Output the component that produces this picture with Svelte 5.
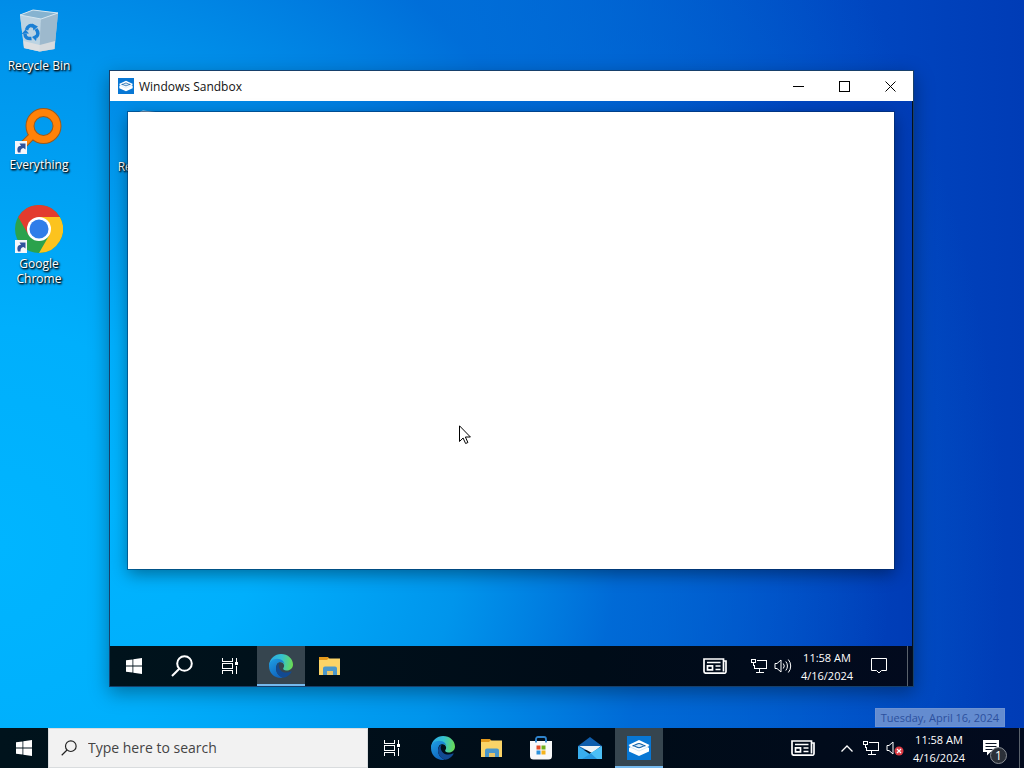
<script lang="ts">
  let query = $state('');

  const time = '11:58 AM';
  const date = '4/16/2024';

  const shortcuts = [
    { name: 'Recycle Bin', icon: recycleBin },
    { name: 'Everything', icon: everything },
    { name: 'Google Chrome', icon: chrome },
  ];

  const pinned = [
    { name: 'Microsoft Edge', icon: edge },
    { name: 'File Explorer', icon: explorer },
    { name: 'Microsoft Store', icon: store },
    { name: 'Mail', icon: mail },
    { name: 'Windows Sandbox', icon: sandbox, active: true },
  ];

  const sessionPinned = [
    { name: 'Microsoft Edge', icon: edge, active: true },
    { name: 'File Explorer', icon: explorer },
  ];
</script>

{#snippet arrowBadge()}
  <rect x="0" y="35" width="12" height="13" fill="#f4f6fa" />
  <path d="M3 46.500c-1.500-4.500 0-6.500 3-6.800L4.500 37.500H10.500V43.500L8.500 42c-2.500.3-3 2-3 4.500z" fill="#2f529c" />
{/snippet}

{#snippet recycleBin()}
  <svg width="48" height="48" viewBox="0 0 48 48" aria-hidden="true">
    <path d="M5 8 18 3l25 3-3.500 36-14.500 2.500L9 41z" fill="#a9c3d6" />
    <path d="M5 8l21 4-1.500 32.500L9 41z" fill="#bcd3e2" />
    <path d="M26 12 43 6l-3.500 36-15 2.500z" fill="#9db9cd" />
    <path d="M8.500 34l16.300 4 15.300-4-.6 8-14.900 2.500L9 41z" fill="#e4e2e2" opacity=".8" />
    <path d="M5 8 18 3l25 3-17 6z" fill="#86b3d0" stroke="#d5e6f0" stroke-linejoin="round" />
    <g fill="none" stroke="#1a7fd4" stroke-width="3.500">
      <path d="M11.500 23c1-4 4-5.500 7-3.500" />
      <path d="M21 22c2.500 3 2.500 6 0 8" />
      <path d="M16.500 31.500c-4 .5-6.500-1-6.500-4.500" />
    </g>
    <path d="M17 16.500l6 3-4.500 4zM22.500 27l-1.500 7-4-4zM6.500 27l4-4.500 3.500 4z" fill="#1a7fd4" />
  </svg>
{/snippet}

{#snippet everything()}
  <svg width="48" height="48" viewBox="0 0 48 48" aria-hidden="true">
    <path d="M18 29 6 41" stroke="#9a5a1c" stroke-width="8" />
    <circle cx="28.500" cy="20" r="13.500" fill="none" stroke="#9a5a1c" stroke-width="9" />
    <path d="M19 28 6 41" stroke="#ff8208" stroke-width="6" />
    <circle cx="28.500" cy="20" r="13.500" fill="none" stroke="#ff8208" stroke-width="7" />
    {@render arrowBadge()}
  </svg>
{/snippet}

{#snippet chrome()}
  <svg width="48" height="48" viewBox="0 0 48 48" aria-hidden="true">
    <circle cx="24" cy="24" r="24" fill="#2ba24c" />
    <path d="M24 12h20.800A24 24 0 0 1 24 48l10.400-18z" fill="#fcc31e" />
    <path d="M3.200 12a24 24 0 0 1 41.600 0H24L13.600 30z" fill="#e33b2e" />
    <circle cx="24" cy="24" r="12" fill="#fff" />
    <circle cx="24" cy="24" r="9.500" fill="#2f7de9" />
    {@render arrowBadge()}
  </svg>
{/snippet}

{#snippet windowsLogo()}
  <svg width="16" height="16" viewBox="0 0 16 16" fill="#fff" aria-hidden="true">
    <path d="M0 2.300 6.500 1.400v6.200H0zM7.300 1.300 16 0v7.600H7.300zM0 8.400h6.500v6.200L0 13.700zM7.300 8.400H16V16l-8.700-1.300z" />
  </svg>
{/snippet}

{#snippet magnifier(size: number, weight: number)}
  <svg width={size} height={size} viewBox="0 0 22 22" fill="none" stroke="currentColor" stroke-width={weight} aria-hidden="true">
    <circle cx="13.500" cy="8.500" r="7.300" />
    <path d="M8.300 13.700 1 21" />
  </svg>
{/snippet}

{#snippet taskView()}
  <svg width="16" height="16" viewBox="0 0 16 16" fill="none" stroke="#fff" shape-rendering="crispEdges" aria-hidden="true">
    <path d="M.5 0v3.500h10V0M.5 16v-3.500h10V16M.5 5.500h10v5H.5zM14.500 0v4M14.500 8v8" />
    <path d="M13 4h3v3h-3z" fill="#fff" stroke="none" />
  </svg>
{/snippet}

{#snippet edge()}
  <svg width="24" height="24" viewBox="0 0 24 24" aria-hidden="true">
    <defs>
      <linearGradient id="edge-top" x1="0" y1=".5" x2="1" y2=".6">
        <stop offset="0" stop-color="#2aa9e6" />
        <stop offset=".5" stop-color="#35c2cf" />
        <stop offset="1" stop-color="#6bdc50" />
      </linearGradient>
      <linearGradient id="edge-left" x1="0" y1="0" x2=".6" y2="1">
        <stop offset="0" stop-color="#1fa0e4" />
        <stop offset="1" stop-color="#0f63bd" />
      </linearGradient>
    </defs>
    <path d="M0 11C1 4 6 0 12 0c7 0 12 5 12 10.500 0 3.500-2.800 6-6 6-3 0-4.500-1.200-3.500-2.700 1.500-2 .5-5.800-4-5.800z" fill="url(#edge-top)" />
    <path d="M0 12c0-4.500 4-7.300 8-7.300 4.500 0 7.500 2.800 7.500 6.300 0-1.800-1.700-3-4-3-3.500 0-4.500 3.500-4.500 6.500 0 4.500 3 7.500 7 9.300C6 25 0 19.500 0 12z" fill="url(#edge-left)" />
    <path d="M11 8.500c-2.700 1-4 3.500-4 6 0 4.500 3.500 8.500 7.500 9.200 4-.7 6.500-3 8-5.700.3-.6-.2-.9-.7-.6-5 2.600-11.300.6-12-4.900-.2-1.800.4-3.200 1.200-4z" fill="#124a92" />
  </svg>
{/snippet}

{#snippet explorer()}
  <svg width="24" height="24" viewBox="0 0 24 24" aria-hidden="true">
    <path d="M1 3h9l1.500 2H22v6H1z" fill="#e49a1c" />
    <path d="M1 6h8l1.500-1.500H22V21H1z" fill="#fbd467" />
    <path d="M5 21v-6.500a2 2 0 0 1 2-2h10a2 2 0 0 1 2 2V21h-4v-4H9v4z" fill="#4a97cb" />
    <path d="M9 17h6v4H9z" fill="#e8c468" />
  </svg>
{/snippet}

{#snippet store()}
  <svg width="24" height="24" viewBox="0 0 24 24" aria-hidden="true">
    <path d="M7 6V3a2 2 0 0 1 2-2h6a2 2 0 0 1 2 2v3" fill="none" stroke="#2f84cc" stroke-width="1.800" />
    <path d="M1 5h22v15a3.500 3.500 0 0 1-3.500 3.500h-15A3.500 3.500 0 0 1 1 20z" fill="#f7f8f9" />
    <path d="M7 6.500V4M17 6.500V4" stroke="#2f84cc" stroke-width="1.800" />
    <path d="M7.500 9.500h4v4h-4z" fill="#e34b27" />
    <path d="M12.500 9.500h4v4h-4z" fill="#6fae18" />
    <path d="M7.500 14.500h4v4h-4z" fill="#2c92dc" />
    <path d="M12.500 14.500h4v4h-4z" fill="#f4b31c" />
  </svg>
{/snippet}

{#snippet mail()}
  <svg width="24" height="24" viewBox="0 0 24 24" aria-hidden="true">
    <path d="M0 10 12 1l12 9v4H0z" fill="#0f5ead" />
    <path d="M1 10h22l-9 7z" fill="#eef3f6" />
    <path d="M24 10v13H3z" fill="#4cc0f6" />
    <path d="M0 10l19 13H0z" fill="#38aeee" />
    <path d="M13 17.500 19 23H4z" fill="#2798e0" />
  </svg>
{/snippet}

{#snippet sandbox(size = 24)}
  <svg width={size} height={size} viewBox="0 0 24 24" aria-hidden="true">
    <path d="M0 0h24v24H0z" fill="#0877d4" />
    <path d="M12 4 22.500 9 20.500 11l1.500 1v3.500L12 20 2 15.500V12l1.500-1-2-2z" fill="#fff" />
    <path d="M2 10.500 12 15l10-4.500" fill="none" stroke="#b4d6f2" stroke-width=".6" />
    <path d="M5.500 9.700C9 9.400 10 7.500 12 7.500s3 1.900 6.500 2.200c-3.500.3-4.500 2-6.500 2s-3-1.700-6.500-2z" fill="#d6e8f6" stroke="#0d5fa8" stroke-width="1.100" />
  </svg>
{/snippet}

{#snippet news()}
  <svg width="24" height="16" viewBox="0 0 24 16" fill="none" stroke="#fff" stroke-width="1.700" aria-hidden="true">
    <path d="M20.500 3H23v10.500a1.700 1.700 0 0 1-2 1.700H3a2 2 0 0 1-2-2V1h19.500v12.500" />
    <path d="M4 4.500h13.500M12.500 8h5M12.500 11.500h5M4.500 7.800h5v4h-5z" />
  </svg>
{/snippet}

{#snippet network()}
  <svg width="16" height="14" viewBox="0 0 16 14" fill="none" stroke="#fff" shape-rendering="crispEdges" aria-hidden="true">
    <path d="M6 1.500h9.500v8h-12V6M5 13.500h8M8.500 10v3" />
    <path d="M.5.500h4v3h-4zM2.500 4v2.500H4" />
  </svg>
{/snippet}

{#snippet speaker(muted = false)}
  <svg width="18" height="16" viewBox="0 0 18 16" fill="none" stroke="#fff" aria-hidden="true">
    <path d="M1 5.500h2L7 2v12l-4-3.500H1z" />
    {#if muted}
      <circle cx="13" cy="11" r="4.500" fill="#dc3a43" stroke="none" />
      <path d="M11 9l4 4m0-4-4 4" stroke-width="1.200" />
    {:else}
      <path d="M9.300 5.500a4 4 0 0 1 0 5M11.800 3.500a7 7 0 0 1 0 9M14.300 1.500a10 10 0 0 1 0 13" />
    {/if}
  </svg>
{/snippet}

{#snippet desktopIcons(items)}
  <ul class="shortcuts">
    {#each items as item}
      <li>
        <button class="shortcut">
          {@render item.icon()}
          <span>{item.name}</span>
        </button>
      </li>
    {/each}
  </ul>
{/snippet}

{#snippet pinnedApps(items)}
  <div class="pinned">
    {#each items as item}
      <button class="task" class:active={item.active} aria-label={item.name}>
        {@render item.icon()}
      </button>
    {/each}
  </div>
{/snippet}

{#snippet clock()}
  <button class="clock">
    <span>{time}</span>
    <span>{date}</span>
  </button>
{/snippet}

<main class="screen">
  <div class="work-area wallpaper">
    {@render desktopIcons(shortcuts)}

    <section class="window" aria-label="Windows Sandbox">
      <header class="titlebar">
        {@render sandbox(16)}
        <span class="title">Windows Sandbox</span>
        <button class="caption" aria-label="Minimize">
          <svg width="11" height="11" viewBox="0 0 11 11" stroke="#000" shape-rendering="crispEdges"><path d="M0 5.500h11" /></svg>
        </button>
        <button class="caption" aria-label="Maximize">
          <svg width="11" height="11" viewBox="0 0 11 11" fill="none" stroke="#000" shape-rendering="crispEdges"><path d="M.5.500h10v10H.5z" /></svg>
        </button>
        <button class="caption" aria-label="Close">
          <svg width="11" height="11" viewBox="0 0 11 11" stroke="#000"><path d="M.5.500l10 10m0-10-10 10" /></svg>
        </button>
      </header>

      <div class="session">
        <div class="work-area wallpaper">
          {@render desktopIcons(shortcuts.slice(0, 1))}
          <div class="blank">
            <svg class="cursor" width="12" height="20" viewBox="0 0 12 20" fill="#fff" stroke="#000" aria-hidden="true">
              <path d="M.5.800v15.700l3.600-3.500 2.500 5.500 2.300-1-2.500-5.500h5z" />
            </svg>
          </div>
        </div>

        <footer class="taskbar">
          <button class="task" aria-label="Start">{@render windowsLogo()}</button>
          <button class="task" aria-label="Search">{@render magnifier(22, 2)}</button>
          <button class="task" aria-label="Task View">{@render taskView()}</button>
          {@render pinnedApps(sessionPinned)}
          <div class="tray">
            <button class="news" aria-label="News">{@render news()}</button>
            <button class="status" aria-label="Network">{@render network()}</button>
            <button class="status" aria-label="Volume">{@render speaker()}</button>
            {@render clock()}
            <button class="task" aria-label="Notifications">
              <svg width="16" height="16" viewBox="0 0 16 16" fill="none" stroke="#fff" aria-hidden="true">
                <path d="M.5.500h15v12h-5L8 15l-2.500-2.500h-5z" />
              </svg>
            </button>
            <button class="peek" aria-label="Show desktop"></button>
          </div>
        </footer>
      </div>
    </section>

    <div class="tooltip" role="tooltip">Tuesday, April 16, 2024</div>
  </div>

  <footer class="taskbar">
    <button class="task" aria-label="Start">{@render windowsLogo()}</button>
    <label class="search">
      {@render magnifier(16, 1.6)}
      <input type="text" aria-label="Search" placeholder="Type here to search" bind:value={query} />
    </label>
    <button class="task" aria-label="Task View">{@render taskView()}</button>
    {@render pinnedApps(pinned)}
    <div class="tray">
      <button class="news" aria-label="News">{@render news()}</button>
      <button class="status" aria-label="Show hidden icons">
        <svg width="12" height="7" viewBox="0 0 12 7" fill="none" stroke="#fff" stroke-width="1.300" aria-hidden="true"><path d="M.5 6.500 6 1l5.500 5.500" /></svg>
      </button>
      <button class="status" aria-label="Network">{@render network()}</button>
      <button class="status" aria-label="Volume">{@render speaker(true)}</button>
      {@render clock()}
      <button class="task" aria-label="Notifications">
        <svg width="16" height="16" viewBox="0 0 16 16" aria-hidden="true">
          <path d="M0 0h16v12H7.500L4 15.500V12H0z" fill="#fff" />
          <path d="M2.500 3.500h11M2.500 6.500h11M2.500 9.500h7" stroke="#0a1424" />
        </svg>
        <span class="count">1</span>
      </button>
      <button class="peek" aria-label="Show desktop"></button>
    </div>
  </footer>
</main>

<style>
  :global(body) {
    margin: 0;
    overflow: hidden;
  }

  .screen {
    display: flex;
    flex-direction: column;
    height: 100vh;
    font-family: 'Open Sans', 'Noto Sans', sans-serif;
    font-size: 12px;
    line-height: 15px;
  }

  button {
    display: flex;
    align-items: center;
    justify-content: center;
    margin: 0;
    padding: 0;
    border: 0;
    background: none;
    color: inherit;
    font: inherit;
  }

  svg {
    flex: none;
  }

  .work-area {
    position: relative;
    flex: 1;
    min-height: 0;
  }

  .wallpaper {
    background:
      radial-gradient(ellipse 98% 150% at 0% 75%, #00b5ff 0%, #00affc 20%, #0095ec 45%, rgba(0, 112, 218, 0.75) 65%, rgba(0, 72, 196, 0) 100%),
      linear-gradient(90deg, #007ce0 0%, #0068d4 45%, #0048c2 82%, #003cb6 100%);
  }

  .shortcuts {
    display: flex;
    flex-direction: column;
    gap: 33px;
    width: 76px;
    margin: 0;
    padding: 7px 0 0 1px;
    list-style: none;
  }

  .shortcut {
    flex-direction: column;
    gap: 3px;
    width: 100%;
    color: #fff;
    text-align: center;
    text-shadow: 1px 1px 2px #000, 1px 1px 2px #000;
  }

  .window {
    position: absolute;
    inset: 70px 110px 41px 109px;
    display: flex;
    flex-direction: column;
    border: 1px solid #17406b;
    background: #fff;
    box-shadow: 0 6px 18px rgba(0, 0, 0, 0.35);
  }

  .titlebar {
    display: flex;
    align-items: center;
    height: 30px;
    padding-left: 8px;
  }

  .title {
    flex: 1;
    padding-left: 5px;
    color: #111;
  }

  .caption {
    width: 46px;
    height: 30px;
  }

  .session {
    display: flex;
    flex: 1;
    flex-direction: column;
    min-height: 0;
    border-right: 1px solid #04101f;
  }

  .blank {
    position: absolute;
    inset: 11px 18px 77px 18px;
    background: #fff;
    box-shadow: 0 0 0 1px rgba(0, 40, 90, 0.5), 0 5px 16px rgba(0, 0, 0, 0.4);
  }

  .cursor {
    position: absolute;
    top: 313px;
    left: 331px;
  }

  .tooltip {
    position: absolute;
    right: 19px;
    bottom: 1px;
    padding: 1px 5px;
    border: 1px solid #6f93d2;
    background: #648cd0;
    color: #2c509e;
    font-size: 11px;
  }

  .taskbar {
    display: flex;
    height: 40px;
    background: linear-gradient(90deg, #00131c, #000c18 60%, #020a1e);
    color: #fff;
  }

  .task {
    position: relative;
    width: 48px;
    height: 40px;
  }

  .task.active {
    background: #36454f;
    box-shadow: inset 0 -2px #76b9ed;
  }

  .pinned {
    display: flex;
    gap: 1px;
    padding-left: 3px;
  }

  .search {
    display: flex;
    align-items: center;
    gap: 11px;
    box-sizing: border-box;
    width: 320px;
    padding: 0 12px;
    border: 1px solid #d9dcde;
    background: #f2f2f2;
    color: #222;
  }

  .search input {
    flex: 1;
    min-width: 0;
    padding: 0;
    border: 0;
    outline: 0;
    background: none;
    color: #222;
    font: inherit;
    font-size: 14px;
    line-height: 20px;
  }

  .search input::placeholder {
    color: #444;
    opacity: 1;
  }

  .tray {
    display: flex;
    margin-left: auto;
  }

  .news {
    width: 24px;
    margin-right: 20px;
  }

  .status {
    width: 24px;
  }

  .clock {
    flex-direction: column;
    gap: 3px;
    width: 56px;
    margin-left: 4px;
    font-size: 11px;
    white-space: nowrap;
  }

  .count {
    position: absolute;
    right: 8px;
    bottom: 4px;
    width: 15px;
    height: 15px;
    border: 1px solid #8a8f96;
    border-radius: 50%;
    background: #2b3038;
    text-align: center;
  }

  .peek {
    width: 5px;
    margin-left: 4px;
    border-left: 1px solid #5a626c;
  }
</style>
